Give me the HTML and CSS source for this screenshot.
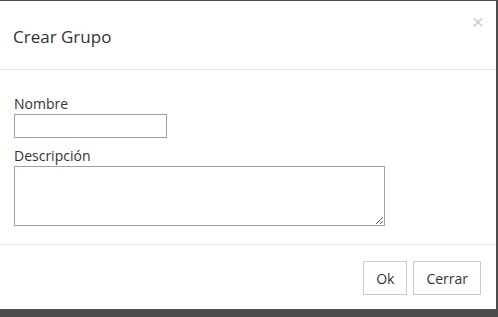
FILE: index.html
```html
<!DOCTYPE html>
<html lang="es">
<head>
    <meta charset="UTF-8">
    <title>Crear Grupo</title>
    <link rel="stylesheet" href="styles.css">
</head>
<body>
    <div class="modal">
        <div class="modal-header">
            <h4 class="modal-title">Crear Grupo</h4>
            <button class="close" type="button">&times;</button>
        </div>
        <div class="modal-body">
            <label for="nombre">Nombre</label>
            <input type="text" id="nombre" class="input-nombre">
            <label for="descripcion">Descripción</label>
            <textarea id="descripcion"></textarea>
        </div>
        <div class="modal-footer">
            <button class="btn" type="button">Ok</button>
            <button class="btn" type="button">Cerrar</button>
        </div>
    </div>
</body>
</html>
```

FILE: styles.css
```css
body {
    margin: 0;
    padding: 0;
    background-color: #4d4d4d;
    font-family: "Open Sans", "Liberation Sans", sans-serif;
    color: #333;
}

.modal {
    width: 496px;
    height: 308px;
    margin-top: 1px;
    background-color: #fff;
    display: flex;
    flex-direction: column;
}

.modal-header {
    height: 68px;
    border-bottom: 1px solid #e5e5e5;
    display: flex;
    align-items: center;
    justify-content: space-between;
    padding: 0 13px;
    position: relative;
}

.modal-title {
    margin: 4px 0 0;
    font-size: 17px;
    font-weight: normal;
    line-height: 24px;
}

.close {
    position: absolute;
    top: 9px;
    right: 12px;
    border: none;
    background: none;
    padding: 0;
    font-size: 21px;
    line-height: 24px;
    color: #ccc;
    font-family: "Liberation Sans", sans-serif;
    cursor: pointer;
}

.modal-body {
    padding: 24px 14px 18px;
    display: flex;
    flex-direction: column;
    align-items: flex-start;
    border-bottom: 1px solid #e5e5e5;
}

label {
    font-size: 14px;
    line-height: 20px;
}

input[type="text"] {
    width: 153px;
    height: 24px;
    box-sizing: border-box;
    border: 1px solid #a0a0a0;
    margin: 0 0 8px;
    padding: 2px 4px;
}

textarea {
    width: 371px;
    height: 60px;
    box-sizing: border-box;
    border: 1px solid #a0a0a0;
    margin: 0;
    padding: 2px 4px;
}

.modal-footer {
    flex: 1;
    display: flex;
    justify-content: flex-end;
    align-items: flex-start;
    gap: 6px;
    padding: 16px 15px 0;
}

.btn {
    height: 34px;
    padding: 0 12px;
    font-family: "Open Sans", "Liberation Sans", sans-serif;
    font-size: 14px;
    color: #333;
    background-color: #fff;
    border: 1px solid #ccc;
    cursor: pointer;
}
```
